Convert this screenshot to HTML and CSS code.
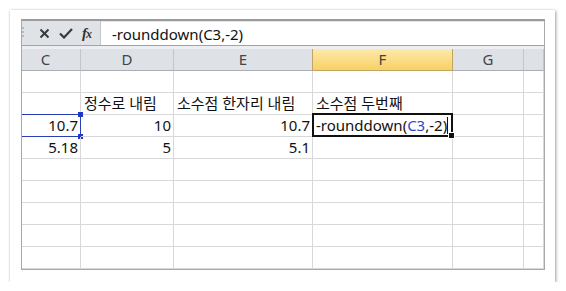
FILE: index.html
```html
<!DOCTYPE html>
<html lang="ko">
<head>
    <meta charset="UTF-8">
    <title>ROUNDDOWN</title>
    <link rel="stylesheet" href="styles.css">
</head>
<body>
    <div class="card">
        <div class="sheet">
            <div class="formula-bar">
                <div class="fx-tools">
                    <span class="grip"></span>
                    <svg class="icon cancel" width="11" height="11" viewBox="0 0 11 11">
                        <path d="M1.5 1.5 L9.5 9.5 M9.5 1.5 L1.5 9.5" stroke="#3a3a3a" stroke-width="2" fill="none"/>
                    </svg>
                    <svg class="icon enter" width="14" height="11" viewBox="0 0 14 11">
                        <path d="M1 5.5 L5 9.5 L13 1" stroke="#3a3a3a" stroke-width="2.2" fill="none"/>
                    </svg>
                    <span class="fx"><i>f</i><i class="fx-x">x</i></span>
                </div>
                <div class="formula-input">-rounddown(C3,-2)</div>
            </div>
            <div class="bar-gap"></div>
            <div class="grid">
                <div class="head cut">C</div>
                <div class="head">D</div>
                <div class="head">E</div>
                <div class="head active">F</div>
                <div class="head">G</div>
                <div class="head"></div>

                <div class="cell"></div><div class="cell"></div><div class="cell"></div><div class="cell"></div><div class="cell"></div><div class="cell"></div>

                <div class="cell"></div>
                <div class="cell">정수로 내림</div>
                <div class="cell">소수점 한자리 내림</div>
                <div class="cell">소수점 두번째</div>
                <div class="cell"></div><div class="cell"></div>

                <div class="cell num ref">10.7<span class="ref-dot top"></span><span class="ref-dot bottom"></span></div>
                <div class="cell num">10</div>
                <div class="cell num">10.7</div>
                <div class="cell editing">-rounddown(<span class="ref-text">C3</span>,-2)<span class="caret"></span><span class="fill-handle"></span></div>
                <div class="cell"></div><div class="cell"></div>

                <div class="cell num">5.18</div>
                <div class="cell num">5</div>
                <div class="cell num">5.1</div>
                <div class="cell"></div><div class="cell"></div><div class="cell"></div>

                <div class="cell"></div><div class="cell"></div><div class="cell"></div><div class="cell"></div><div class="cell"></div><div class="cell"></div>
                <div class="cell"></div><div class="cell"></div><div class="cell"></div><div class="cell"></div><div class="cell"></div><div class="cell"></div>
                <div class="cell"></div><div class="cell"></div><div class="cell"></div><div class="cell"></div><div class="cell"></div><div class="cell"></div>
                <div class="cell"></div><div class="cell"></div><div class="cell"></div><div class="cell"></div><div class="cell"></div><div class="cell"></div>
                <div class="cell"></div><div class="cell"></div><div class="cell"></div><div class="cell"></div><div class="cell"></div><div class="cell"></div>
            </div>
        </div>
    </div>
</body>
</html>
```

FILE: styles.css
```css
body {
    margin: 0;
    background-color: #fff;
    font-family: "Noto Sans", "Noto Sans CJK KR", sans-serif;
    font-size: 15px;
    color: #111;
}
.card {
    margin: 10px 0 0 10px;
    width: 545px;
    height: 272px;
    box-sizing: border-box;
    padding: 9px 10px 0 11px;
    background-color: #fff;
    box-shadow: 1px 1px 3px rgba(0, 0, 0, 0.35), 0 0 2px rgba(0, 0, 0, 0.12);
}
.sheet {
    height: 251px;
    box-sizing: border-box;
    border-top: 2px solid #9b9b9b;
    border-left: 1px solid #a9a9a9;
    border-right: 1px solid #a9a9a9;
    border-bottom: 1px solid #a9a9a9;
    overflow: hidden;
}
.formula-bar {
    display: flex;
    height: 24px;
    border-bottom: 1px solid #9fa4aa;
}
.fx-tools {
    position: relative;
    width: 78px;
    display: flex;
    align-items: center;
    background-color: #dfe3e8;
    border-right: 1px solid #c3c6ca;
}
.grip {
    position: absolute;
    left: 0;
    top: 6px;
    width: 2px;
    height: 12px;
    background: repeating-linear-gradient(#b9bcc0 0 2px, transparent 2px 4px);
}
.icon.cancel {
    margin-left: 17px;
}
.icon.enter {
    margin-left: 9px;
}
.fx {
    margin-left: 9px;
    font-family: "Liberation Serif", serif;
    font-size: 15px;
    font-weight: bold;
    color: #333;
    letter-spacing: -1px;
}
.fx-x {
    font-size: 12px;
}
.formula-input {
    flex: 1;
    padding-left: 11px;
    line-height: 24px;
    background-color: #fff;
    border-top: 1px solid #e2e4e7;
}
.bar-gap {
    height: 3px;
    background-color: #eceef1;
}
.grid {
    display: grid;
    grid-template-columns: 59px 93px 139px 140px 71px 1fr;
    grid-auto-rows: 22px;
}
.head {
    text-align: center;
    line-height: 21px;
    color: #444;
    background-color: #dee2e7;
    border-right: 1px solid #c3c7cc;
    border-bottom: 1px solid #a9aeb4;
}
.head.cut {
    padding-right: 11px;
}
.head.active {
    background: linear-gradient(#fde9a9, #f8d166);
    border-left: 1px solid #c2a563;
    border-right: 1px solid #c2a563;
    margin-left: -1px;
    border-bottom-color: #c2a563;
}
.cell {
    position: relative;
    padding: 0 3px;
    line-height: 21px;
    white-space: nowrap;
    border-right: 1px solid #d8d8d8;
    border-bottom: 1px solid #d8d8d8;
}
.cell.num {
    text-align: right;
    padding-right: 2px;
}
.cell.ref {
    margin-top: -1px;
    border-top: 1px solid #2a3fb3;
    border-right-color: #2a3fb3;
    border-bottom-color: #2a3fb3;
}
.ref-dot {
    position: absolute;
    right: -3px;
    width: 5px;
    height: 5px;
    background-color: #1f37c9;
}
.ref-dot.top {
    top: -3px;
}
.ref-dot.bottom {
    bottom: -3px;
}
.cell.editing {
    margin: -2px 0 0 -1px;
    padding-left: 2px;
    border: 2px solid #111;
    z-index: 1;
}
.ref-text {
    color: #3347c2;
}
.caret {
    position: absolute;
    left: 133px;
    top: 2px;
    width: 1px;
    height: 17px;
    background-color: #111;
}
.fill-handle {
    position: absolute;
    right: -4px;
    bottom: -4px;
    width: 5px;
    height: 5px;
    background-color: #111;
    border: 1px solid #fff;
}
```
